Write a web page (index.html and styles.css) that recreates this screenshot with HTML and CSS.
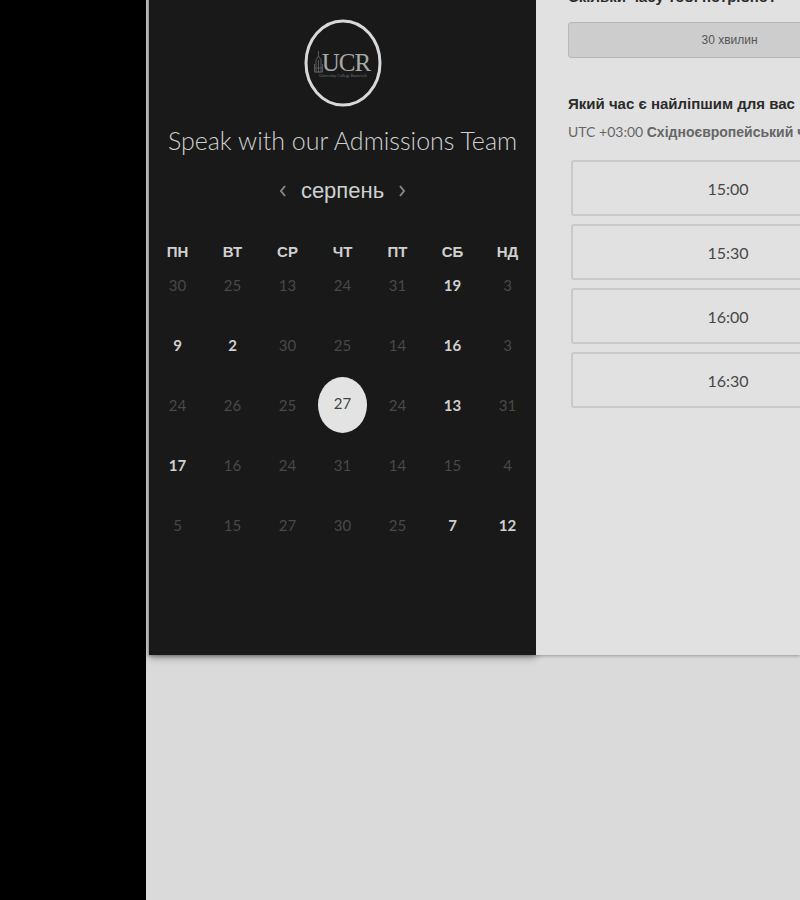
FILE: index.html
```
<!DOCTYPE html>
<html lang="uk">
<head>
<meta charset="utf-8">
<meta name="viewport" content="width=device-width, initial-scale=1">
<title>Speak with our Admissions Team</title>
<link rel="stylesheet" href="styles.css">
</head>
<body>
<main class="stage">
  <div class="card">
    <section class="calendar">
      <svg class="logo" viewBox="0 0 78 88" role="img" aria-label="UCR">
        <ellipse cx="39" cy="44" rx="37" ry="42" fill="none" stroke="#d8d8d8" stroke-width="3"/>
        <g fill="none" stroke="#585858" stroke-width="1">
          <path d="M14.500 32V38M12 41L14.500 37L17 41V53H12ZM14.500 41V53M10.500 45V53M18.500 45V53M10 49H19M10 53H19"/>
        </g>
        <text class="logo-name" x="42" y="52" text-anchor="middle">UCR</text>
        <text class="logo-sub" x="39" y="58" text-anchor="middle">University College Roosevelt</text>
      </svg>
      <h1 class="title">Speak with our Admissions Team</h1>
      <div class="month">
        <button class="arrow" type="button" aria-label="Попередній місяць"><svg viewBox="0 0 8 12"><path d="M6 1L2 6L6 11"/></svg></button>
        <span class="month-name">серпень</span>
        <button class="arrow" type="button" aria-label="Наступний місяць"><svg viewBox="0 0 8 12"><path d="M2 1L6 6L2 11"/></svg></button>
      </div>
      <table class="days">
        <thead>
          <tr><th>ПН</th><th>ВТ</th><th>СР</th><th>ЧТ</th><th>ПТ</th><th>СБ</th><th>НД</th></tr>
        </thead>
        <tbody>
          <tr><td><button class="day" disabled>30</button></td><td><button class="day" disabled>25</button></td><td><button class="day" disabled>13</button></td><td><button class="day" disabled>24</button></td><td><button class="day" disabled>31</button></td><td><button class="day">19</button></td><td><button class="day" disabled>3</button></td></tr>
          <tr><td><button class="day">9</button></td><td><button class="day">2</button></td><td><button class="day" disabled>30</button></td><td><button class="day" disabled>25</button></td><td><button class="day" disabled>14</button></td><td><button class="day">16</button></td><td><button class="day" disabled>3</button></td></tr>
          <tr><td><button class="day" disabled>24</button></td><td><button class="day" disabled>26</button></td><td><button class="day" disabled>25</button></td><td><button class="day selected" aria-pressed="true">27</button></td><td><button class="day" disabled>24</button></td><td><button class="day">13</button></td><td><button class="day" disabled>31</button></td></tr>
          <tr><td><button class="day">17</button></td><td><button class="day" disabled>16</button></td><td><button class="day" disabled>24</button></td><td><button class="day" disabled>31</button></td><td><button class="day" disabled>14</button></td><td><button class="day" disabled>15</button></td><td><button class="day" disabled>4</button></td></tr>
          <tr><td><button class="day" disabled>5</button></td><td><button class="day" disabled>15</button></td><td><button class="day" disabled>27</button></td><td><button class="day" disabled>30</button></td><td><button class="day" disabled>25</button></td><td><button class="day">7</button></td><td><button class="day">12</button></td></tr>
        </tbody>
      </table>
    </section>
    <section class="booking">
      <h2 class="question">Скільки часу тобі потрібно?</h2>
      <button class="duration" type="button">30 хвилин</button>
      <h2 class="question">Який час є найліпшим для вас</h2>
      <p class="zone">UTC +03:00 <b>Східноєвропейський ч</b></p>
      <div class="slots">
        <button class="slot" type="button">15:00</button>
        <button class="slot" type="button">15:30</button>
        <button class="slot" type="button">16:00</button>
        <button class="slot" type="button">16:30</button>
      </div>
    </section>
  </div>
</main>
</body>
</html>
```
FILE: styles.css
```
* { box-sizing: border-box; }
body {
  margin: 0;
  background: #000;
  font-family: Lato, "Liberation Sans", sans-serif;
  overflow: hidden;
}
button {
  padding: 0;
  border: 0;
  background: none;
  font: inherit;
  color: inherit;
}
.stage {
  min-height: 100vh;
  margin-left: 146px;
  padding-left: 3px;
  background: #dadada;
  overflow: hidden;
}
/* The card is scrolled slightly past the top edge. */
.card {
  display: flex;
  margin-top: -16px;
  background: #e1e1e1;
  box-shadow: 0 1px 3px rgba(0, 0, 0, 0.3);
}
.calendar {
  flex: 0 0 387px;
  display: flex;
  flex-direction: column;
  align-items: center;
  padding: 35px 1px 98px;
  background: #191919;
  color: #d0d0d0;
  box-shadow: 0 2px 8px rgba(0, 0, 0, 0.4);
}
.logo { width: 78px; height: 88px; }
.logo-name {
  font: 25px "Liberation Serif", serif;
  letter-spacing: -1px;
  fill: #a8a8a8;
}
.logo-sub {
  font: 4px "Liberation Serif", serif;
  fill: #777;
}
.title {
  margin: 15px 0 0;
  font-size: 25px;
  line-height: 36px;
  font-weight: 300;
  white-space: nowrap;
}
.month {
  display: flex;
  align-items: center;
  gap: 14px;
  margin-top: 17px;
  height: 32px;
}
.month-name {
  font: 22px/32px "Liberation Sans", sans-serif;
}
.arrow { display: flex; }
.arrow svg {
  width: 8px;
  height: 12px;
  fill: none;
  stroke: #858585;
  stroke-width: 2;
}
.days {
  width: 100%;
  margin-top: 40px;
  table-layout: fixed;
  border-collapse: collapse;
}
.days th {
  height: 10px;
  padding: 0;
  font: bold 15px/10px "Liberation Sans", sans-serif;
}
.days td {
  height: 60px;
  padding: 0 0 4px;
  text-align: center;
}
.day {
  display: block;
  width: 49px;
  height: 56px;
  margin: 0 auto;
  border-radius: 50%;
  font-size: 15px;
  font-weight: 700;
}
.day:disabled {
  color: #484848;
  font-weight: 400;
}
.day.selected {
  padding-bottom: 4px;
  background: #e3e3e3;
  color: #444;
  font-weight: 400;
}
/* Painted above the calendar's shadow. */
.booking {
  position: relative;
  flex: 1 0 355px;
  padding: 2px 0 0 32px;
  background: #e1e1e1;
}
.question {
  margin: 0;
  font: bold 15px/22px "Liberation Sans", sans-serif;
  color: #2b2b2b;
  white-space: nowrap;
}
.duration {
  display: block;
  width: 323px;
  height: 36px;
  margin: 14px 0 35px;
  border: 1px solid #b9b9b9;
  border-radius: 3px;
  background: #cdcdcd;
  font: 12px "Liberation Sans", sans-serif;
  color: #555;
}
.zone {
  margin: 7px 0 0;
  font-size: 14px;
  line-height: 20px;
  color: #666;
  white-space: nowrap;
}
.zone b { font-family: "Liberation Sans", sans-serif; font-size: 14px; }
.slots {
  display: grid;
  gap: 8px;
  width: 314px;
  margin: 18px 0 0 3px;
}
.slot {
  height: 56px;
  border: 2px solid #cacaca;
  border-radius: 3px;
  font-size: 16px;
  color: #484848;
}
```
